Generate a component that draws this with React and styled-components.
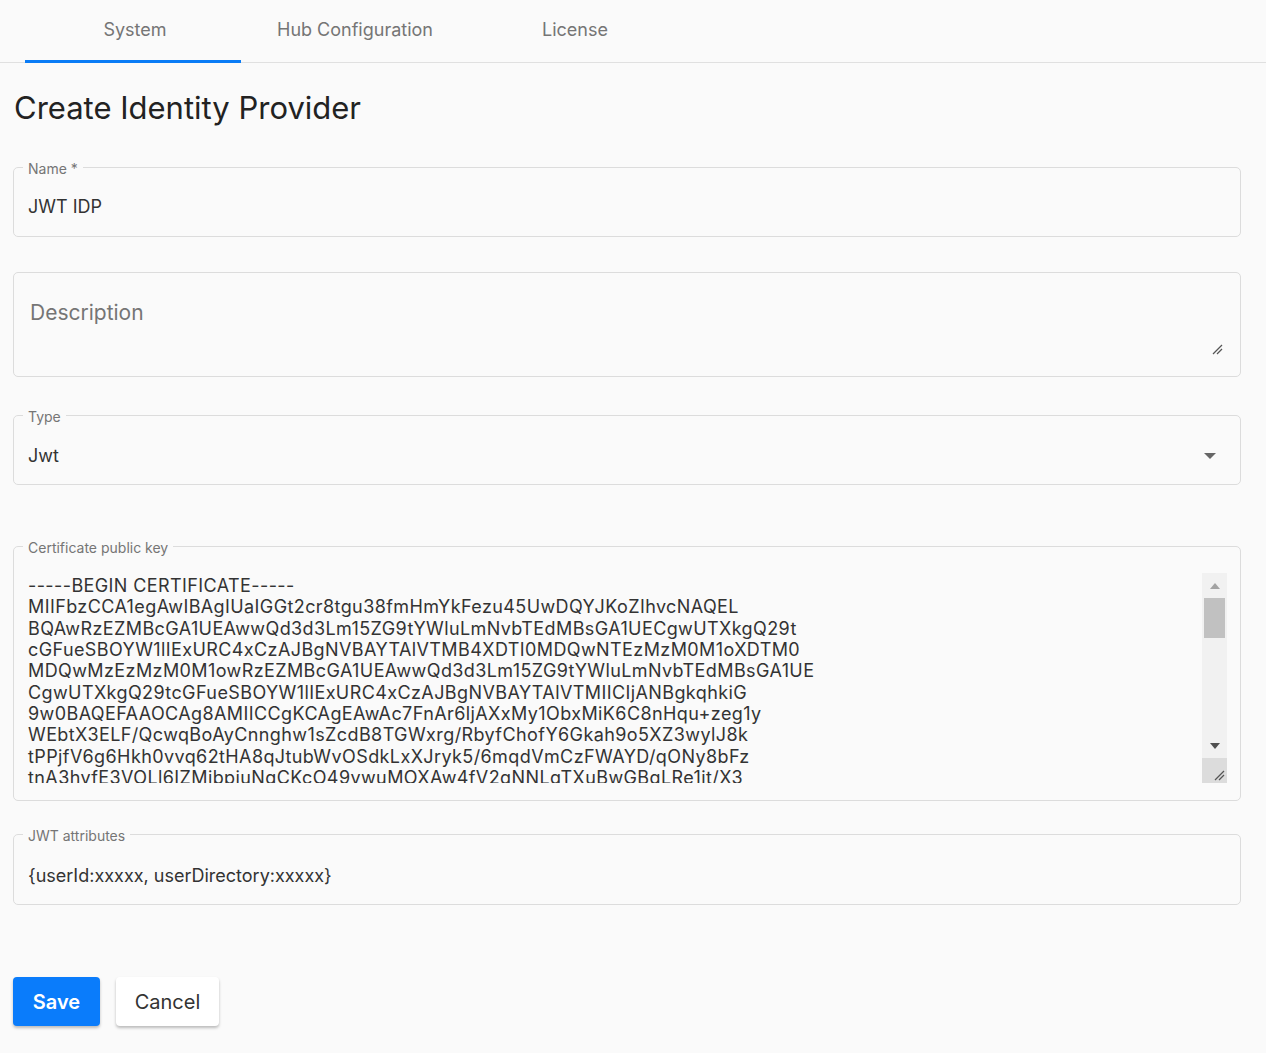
import React from "react";
import styled, { createGlobalStyle } from "styled-components";

const Global = createGlobalStyle`
  html, body { margin: 0; padding: 0; background: #fafafa; }
  body { font-family: "Inter", "Noto Sans", sans-serif; color: #333; }
  * { box-sizing: border-box; }
`;

const Page = styled.div`
  width: 1266px;
  min-height: 1053px;
  background: #fafafa;
`;

const TabBar = styled.div`
  display: flex;
  height: 63px;
  padding-left: 25px;
  border-bottom: 1px solid #e0e0e0;
`;

const Tab = styled.div`
  position: relative;
  width: 220px;
  display: flex;
  align-items: center;
  justify-content: center;
  font-size: 18px;
  color: #757575;
  padding-bottom: 4px;
  &::after {
    content: "";
    display: ${(p) => (p.$active ? "block" : "none")};
    position: absolute;
    left: 0;
    bottom: -1px;
    width: 216px;
    height: 3px;
    background: #0a7cf6;
  }
`;

const Content = styled.div`
  padding: 0 25px 0 13px;
  display: flex;
  flex-direction: column;
`;

const Title = styled.h1`
  margin: 25px 0 0 1px;
  font-size: 31px;
  line-height: 40px;
  font-weight: 400;
  color: #222;
`;

const Field = styled.fieldset`
  margin: ${(p) => p.$mt}px 0 0 0;
  padding: 0 13px 0 9px;
  border: 1px solid #dcdcdc;
  border-radius: 5px;
  min-width: 0;
`;

const Legend = styled.legend`
  padding: 4px 5px 0 5px;
  font-size: 14px;
  line-height: 16px;
  color: #757575;
`;

const ValueText = styled.div`
  padding: ${(p) => p.$pt}px 5px ${(p) => p.$pb}px 5px;
  font-size: 18px;
  line-height: 22px;
  color: #333;
  display: flex;
  align-items: center;
  justify-content: space-between;
`;

const Placeholder = styled.div`
  position: relative;
  height: 103px;
  padding: 28px 5px 0 7px;
  font-size: 21px;
  line-height: 24px;
  color: #757575;
`;

const Grip = styled.svg`
  position: absolute;
  right: 4px;
  bottom: 21px;
`;

const Caret = styled.svg`
  margin-right: 6px;
`;

const CertBody = styled.div`
  display: flex;
  height: 210px;
  margin: 17px 0 17px 0;
`;

const CertText = styled.div`
  flex: 1;
  padding: 2px 0 0 5px;
  overflow: hidden;
  white-space: pre;
  font-size: 18px;
  line-height: 21.33px;
  letter-spacing: 0.4px;
  color: #333;
`;

const ScrollTrack = styled.div`
  width: 25px;
  display: flex;
  flex-direction: column;
  align-items: center;
  background: #f1f1f1;
`;

const ScrollArrow = styled.div`
  height: 25px;
  width: 25px;
  display: flex;
  align-items: center;
  justify-content: center;
`;

const Thumb = styled.div`
  width: 21px;
  height: 40px;
  background: #c1c1c1;
`;

const Spacer = styled.div`
  flex: 1;
`;

const Corner = styled.div`
  width: 25px;
  height: 25px;
  background: #dcdcdc;
  display: flex;
  align-items: flex-end;
  justify-content: flex-end;
  padding: 0 2px 2px 0;
`;

const Buttons = styled.div`
  display: flex;
  gap: 16px;
  margin-top: 72px;
`;

const Button = styled.button`
  height: 49px;
  width: ${(p) => (p.$primary ? 87 : 103)}px;
  padding: 0;
  border: none;
  border-radius: 4px;
  font-family: inherit;
  font-size: 20px;
  font-weight: ${(p) => (p.$primary ? 600 : 400)};
  color: ${(p) => (p.$primary ? "#fff" : "#333")};
  background: ${(p) => (p.$primary ? "#0a7cfb" : "#fff")};
  box-shadow: 0 2px 3px rgba(0, 0, 0, 0.25);
  cursor: pointer;
`;

const certLines = [
  "-----BEGIN CERTIFICATE-----",
  "MIIFbzCCA1egAwIBAgIUaIGGt2cr8tgu38fmHmYkFezu45UwDQYJKoZIhvcNAQEL",
  "BQAwRzEZMBcGA1UEAwwQd3d3Lm15ZG9tYWluLmNvbTEdMBsGA1UECgwUTXkgQ29t",
  "cGFueSBOYW1lIExURC4xCzAJBgNVBAYTAlVTMB4XDTI0MDQwNTEzMzM0M1oXDTM0",
  "MDQwMzEzMzM0M1owRzEZMBcGA1UEAwwQd3d3Lm15ZG9tYWluLmNvbTEdMBsGA1UE",
  "CgwUTXkgQ29tcGFueSBOYW1lIExURC4xCzAJBgNVBAYTAlVTMIICIjANBgkqhkiG",
  "9w0BAQEFAAOCAg8AMIICCgKCAgEAwAc7FnAr6ljAXxMy1ObxMiK6C8nHqu+zeg1y",
  "WEbtX3ELF/QcwqBoAyCnnghw1sZcdB8TGWxrg/RbyfChofY6Gkah9o5XZ3wylJ8k",
  "tPPjfV6g6Hkh0vvq62tHA8qJtubWvOSdkLxXJryk5/6mqdVmCzFWAYD/qONy8bFz",
  "tnA3hvfE3VOLl6IZMibpiuNqCKcO49vwuMOXAw4fV2qNNLqTXuBwGBqLRe1it/X3",
  "Pq8sVn2xYh3KdL0mTeWqZ7uB5cRjN4aFgH1iO9pS6wC",
];

const GripIcon = () => (
  <svg width="11" height="11" viewBox="0 0 11 11">
    <line x1="1" y1="10" x2="10" y2="1" stroke="#555" strokeWidth="1.2" />
    <line x1="5" y1="10" x2="10" y2="5" stroke="#555" strokeWidth="1.2" />
  </svg>
);

export default function App() {
  return (
    <Page>
      <Global />
      <TabBar>
        <Tab $active>System</Tab>
        <Tab>Hub Configuration</Tab>
        <Tab>License</Tab>
      </TabBar>
      <Content>
        <Title>Create Identity Provider</Title>

        <Field $mt={29}>
          <Legend>Name *</Legend>
          <ValueText $pt={19} $pb={18}>JWT IDP</ValueText>
        </Field>

        <Field $mt={35}>
          <Placeholder>
            Description
            <Grip width="11" height="11" viewBox="0 0 11 11">
              <line x1="1" y1="10" x2="10" y2="1" stroke="#555" strokeWidth="1.2" />
              <line x1="5" y1="10" x2="10" y2="5" stroke="#555" strokeWidth="1.2" />
            </Grip>
          </Placeholder>
        </Field>

        <Field $mt={28}>
          <Legend>Type</Legend>
          <ValueText $pt={20} $pb={17}>
            Jwt
            <Caret width="12" height="6" viewBox="0 0 12 6">
              <path d="M0 0 L12 0 L6 6 Z" fill="#666" />
            </Caret>
          </ValueText>
        </Field>

        <Field $mt={51}>
          <Legend>Certificate public key</Legend>
          <CertBody>
            <CertText>{certLines.join("\n")}</CertText>
            <ScrollTrack>
              <ScrollArrow>
                <svg width="10" height="6" viewBox="0 0 10 6">
                  <path d="M0 6 L10 6 L5 0 Z" fill="#a3a3a3" />
                </svg>
              </ScrollArrow>
              <Thumb />
              <Spacer />
              <ScrollArrow>
                <svg width="10" height="6" viewBox="0 0 10 6">
                  <path d="M0 0 L10 0 L5 6 Z" fill="#505050" />
                </svg>
              </ScrollArrow>
              <Corner>
                <GripIcon />
              </Corner>
            </ScrollTrack>
          </CertBody>
        </Field>

        <Field $mt={23}>
          <Legend>JWT attributes</Legend>
          <ValueText $pt={21} $pb={17}>{"{userId:xxxxx, userDirectory:xxxxx}"}</ValueText>
        </Field>

        <Buttons>
          <Button $primary>Save</Button>
          <Button>Cancel</Button>
        </Buttons>
      </Content>
    </Page>
  );
}
